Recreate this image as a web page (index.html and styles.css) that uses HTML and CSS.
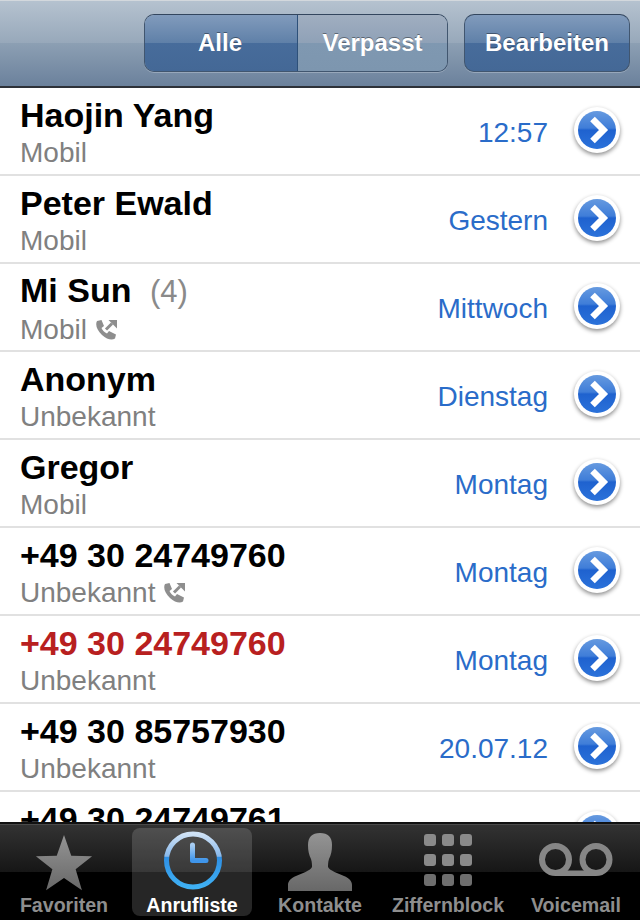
FILE: index.html
```html
<!DOCTYPE html>
<html lang="de">
<head>
    <meta charset="UTF-8">
    <meta name="viewport" content="width=device-width, initial-scale=1.0">
    <title>Anrufliste</title>
    <link rel="stylesheet" href="styles.css">
</head>
<body>
    <svg class="defs" width="0" height="0">
        <defs>
            <linearGradient id="discBlue" x1="0" y1="0" x2="0" y2="1">
                <stop offset="0" stop-color="#669ae0"/>
                <stop offset="0.45" stop-color="#3f7dd8"/>
                <stop offset="0.5" stop-color="#1f62cf"/>
                <stop offset="1" stop-color="#2b72da"/>
            </linearGradient>
            <linearGradient id="clockRing" x1="0" y1="0" x2="0" y2="1">
                <stop offset="0" stop-color="#cfe2f6"/>
                <stop offset="0.42" stop-color="#88b8ea"/>
                <stop offset="0.44" stop-color="#2e8fe4"/>
                <stop offset="1" stop-color="#3fb0f4"/>
            </linearGradient>
            <linearGradient id="clockHand" x1="0" y1="0" x2="0" y2="1">
                <stop offset="0" stop-color="#a8cdf2"/>
                <stop offset="1" stop-color="#3f95ea"/>
            </linearGradient>
            <linearGradient id="tabGrey" x1="0" y1="0" x2="0" y2="1">
                <stop offset="0" stop-color="#949494"/>
                <stop offset="1" stop-color="#686868"/>
            </linearGradient>
            <symbol id="disc" viewBox="0 0 52 52">
                <circle cx="26" cy="26" r="23" fill="#fff"/>
                <circle cx="26" cy="26" r="19" fill="url(#discBlue)"/>
                <path d="M21.500 15 L32.500 26 L21.500 37" fill="none" stroke="#fff" stroke-width="6.500"/>
            </symbol>
            <symbol id="callback" viewBox="0 0 22 20">
                <path d="M2 1 L6.500 0 L9 6 L6.500 8 C7.500 10.500 9.500 12.500 12 13.500 L14 11 L21 14.500 L20 18.500 C17 20.500 12 19.500 7 15 C2 10.500 0 5 2 1 Z" fill="#8e8e8e"/>
                <path d="M11 9.500 L17 3.500" fill="none" stroke="#8e8e8e" stroke-width="3"/>
                <path d="M13.500 0 H22 V8.500 Z" fill="#8e8e8e"/>
            </symbol>
        </defs>
    </svg>

    <div class="phone">
        <header class="navbar">
            <div class="segmented">
                <span class="seg seg-active">Alle</span>
                <span class="seg">Verpasst</span>
            </div>
            <span class="edit-btn">Bearbeiten</span>
        </header>

        <ul class="calls">
            <li class="call">
                <div class="who"><div class="name">Haojin Yang</div><div class="kind">Mobil</div></div>
                <span class="when">12:57</span>
                <svg class="disc"><use href="#disc"/></svg>
            </li>
            <li class="call">
                <div class="who"><div class="name">Peter Ewald</div><div class="kind">Mobil</div></div>
                <span class="when">Gestern</span>
                <svg class="disc"><use href="#disc"/></svg>
            </li>
            <li class="call">
                <div class="who"><div class="name">Mi Sun <span class="count">(4)</span></div><div class="kind">Mobil <svg class="cb"><use href="#callback"/></svg></div></div>
                <span class="when">Mittwoch</span>
                <svg class="disc"><use href="#disc"/></svg>
            </li>
            <li class="call">
                <div class="who"><div class="name">Anonym</div><div class="kind">Unbekannt</div></div>
                <span class="when">Dienstag</span>
                <svg class="disc"><use href="#disc"/></svg>
            </li>
            <li class="call">
                <div class="who"><div class="name">Gregor</div><div class="kind">Mobil</div></div>
                <span class="when">Montag</span>
                <svg class="disc"><use href="#disc"/></svg>
            </li>
            <li class="call">
                <div class="who"><div class="name">+49 30 24749760</div><div class="kind">Unbekannt <svg class="cb"><use href="#callback"/></svg></div></div>
                <span class="when">Montag</span>
                <svg class="disc"><use href="#disc"/></svg>
            </li>
            <li class="call">
                <div class="who"><div class="name missed">+49 30 24749760</div><div class="kind">Unbekannt</div></div>
                <span class="when">Montag</span>
                <svg class="disc"><use href="#disc"/></svg>
            </li>
            <li class="call">
                <div class="who"><div class="name">+49 30 85757930</div><div class="kind">Unbekannt</div></div>
                <span class="when">20.07.12</span>
                <svg class="disc"><use href="#disc"/></svg>
            </li>
            <li class="call">
                <div class="who"><div class="name">+49 30 24749761</div><div class="kind"></div></div>
                <svg class="disc"><use href="#disc"/></svg>
            </li>
        </ul>

        <nav class="tabbar">
            <div class="tab">
                <svg class="star" viewBox="0 0 64 64"><path d="M32 3 L39.500 24.500 L61 25 L44 38.500 L50.500 60 L32 47.500 L13.500 60 L20 38.500 L3 25 L24.500 24.500 Z" fill="url(#tabGrey)"/></svg>
                <span class="tab-label">Favoriten</span>
            </div>
            <div class="tab tab-active">
                <svg class="clock" viewBox="0 0 64 64">
                    <circle cx="33" cy="32.500" r="26.500" fill="none" stroke="url(#clockRing)" stroke-width="5"/>
                    <path d="M32.500 17 V32.500 H46" fill="none" stroke="url(#clockHand)" stroke-width="5" stroke-linecap="round" stroke-linejoin="round"/>
                </svg>
                <span class="tab-label">Anrufliste</span>
            </div>
            <div class="tab">
                <svg class="person" viewBox="0 0 64 58"><path d="M32 0 C40 0 44 4 44 12 C44 18 43 22 41 26 C40 29 40 32 40 34 C42 38 50 40 56 43 C61 45 64 48 64 52 V58 H0 V52 C0 48 3 45 8 43 C14 40 22 38 24 34 C24 32 24 29 23 26 C21 22 20 18 20 12 C20 4 24 0 32 0 Z" fill="url(#tabGrey)"/></svg>
                <span class="tab-label">Kontakte</span>
            </div>
            <div class="tab">
                <div class="keypad">
                    <i></i><i></i><i></i><i></i><i></i><i></i><i></i><i></i><i></i>
                </div>
                <span class="tab-label">Ziffernblock</span>
            </div>
            <div class="tab">
                <svg class="voicemail" viewBox="0 0 74 33">
                    <circle cx="16.500" cy="16.500" r="13.500" fill="none" stroke="#868686" stroke-width="6"/>
                    <circle cx="57" cy="16.500" r="13.500" fill="none" stroke="#868686" stroke-width="6"/>
                    <rect x="16.500" y="27.500" width="40.500" height="5.500" fill="#868686"/>
                </svg>
                <span class="tab-label">Voicemail</span>
            </div>
        </nav>
    </div>
</body>
</html>
```

FILE: styles.css
```css
* {
    box-sizing: border-box;
}
html, body {
    margin: 0;
    padding: 0;
    height: 100%;
}
body {
    font-family: "Liberation Sans", Arial, sans-serif;
    background: #fff;
    overflow: hidden;
}
.defs {
    display: block;
    height: 0;
}
.phone {
    display: flex;
    flex-direction: column;
    height: 920px;
    width: 640px;
}

/* top bar */
.navbar {
    flex: 0 0 88px;
    display: flex;
    justify-content: flex-end;
    gap: 16px;
    padding: 13px 10px 0 0;
    background: linear-gradient(#b5c2cf, #97a8ba 50%, #8c9fb3 50%, #6b819c);
    border-top: 1px solid #d3d8dd;
    border-bottom: 2px solid #2d3138;
}
.segmented {
    display: flex;
    width: 304px;
    height: 58px;
    border: 1px solid #41566f;
    border-top-color: #33465e;
    border-radius: 10px;
    overflow: hidden;
    box-shadow: 0 1px 0 rgba(255, 255, 255, 0.25);
}
.seg {
    display: flex;
    align-items: center;
    justify-content: center;
    flex: 1;
    font-size: 24px;
    font-weight: bold;
    color: #fff;
    text-shadow: 0 -1px 0 rgba(0, 0, 0, 0.4);
    background: linear-gradient(#a0aec0, #8fa1b7 50%, #7f98b1 50%, #7d96af);
}
.seg-active, .edit-btn {
    background: linear-gradient(#819bbc, #5f80a8 50%, #476c9b 50%, #446896);
}
.seg-active {
    flex: 0 0 153px;
    padding-right: 2px;
    border-right: 1px solid #2d5079;
}
.edit-btn {
    display: flex;
    align-items: center;
    justify-content: center;
    width: 166px;
    height: 58px;
    border: 1px solid #41566f;
    border-top-color: #33465e;
    border-radius: 10px;
    box-shadow: 0 1px 0 rgba(255, 255, 255, 0.25);
    font-size: 24px;
    font-weight: bold;
    color: #fff;
    text-shadow: 0 -1px 0 rgba(0, 0, 0, 0.4);
}

/* call list */
.calls {
    flex: 1;
    list-style: none;
    margin: 0;
    padding: 0;
    overflow: hidden;
}
.call {
    display: flex;
    align-items: center;
    height: 88px;
    padding: 0 17px 0 20px;
    border-bottom: 2px solid #e1e1e1;
}
.who {
    flex: 1;
    padding-top: 5px;
}
.name {
    font-size: 34px;
    font-weight: bold;
    line-height: 38px;
    margin-bottom: 1px;
    color: #000;
}
.name.missed {
    color: #b8201f;
}
.count {
    font-size: 31px;
    font-weight: normal;
    color: #8a8a8a;
    margin-left: 9px;
}
.kind {
    display: flex;
    align-items: center;
    gap: 8px;
    min-height: 36px;
    font-size: 28px;
    line-height: 36px;
    color: #808080;
}
.cb {
    width: 22px;
    height: 20px;
}
.when {
    padding-top: 4px;
    font-size: 28px;
    color: #2a6cc9;
    margin-right: 23px;
}
.disc {
    width: 52px;
    height: 52px;
    margin-bottom: 2px;
    filter: drop-shadow(0 2px 2px rgba(0, 0, 0, 0.45));
}

/* bottom tabs */
.tabbar {
    flex: 0 0 98px;
    display: grid;
    grid-template-columns: repeat(5, 128px);
    padding: 4px 0;
    background: linear-gradient(#333, #161616 50%, #000 50%);
    border-top: 2px solid #111;
    box-shadow: inset 0 1px 0 #4a4a4a;
}
.tab {
    display: flex;
    flex-direction: column;
    align-items: center;
    height: 88px;
    font-size: 19.600px;
    font-weight: bold;
    color: #8e8e8e;
}
.tab-active {
    margin: 0 4px;
    color: #fff;
    border-radius: 8px;
    background: rgba(255, 255, 255, 0.15);
}
.tab-label {
    margin-top: auto;
    line-height: 22px;
}
.star {
    width: 62px;
    height: 62px;
    margin-top: 4px;
}
.clock {
    width: 64px;
    height: 64px;
}
.person {
    width: 64px;
    height: 58px;
    margin-top: 5px;
}
.keypad {
    display: grid;
    grid-template-columns: repeat(3, 12px);
    grid-auto-rows: 12px;
    gap: 8px 6px;
    width: 48px;
    margin-top: 6px;
}
.keypad i {
    background: #8a8a8a;
    border-radius: 3px;
}
.keypad i:nth-child(n+7) {
    background: #6e6e6e;
}
.voicemail {
    width: 74px;
    height: 33px;
    margin-top: 15px;
}
```
